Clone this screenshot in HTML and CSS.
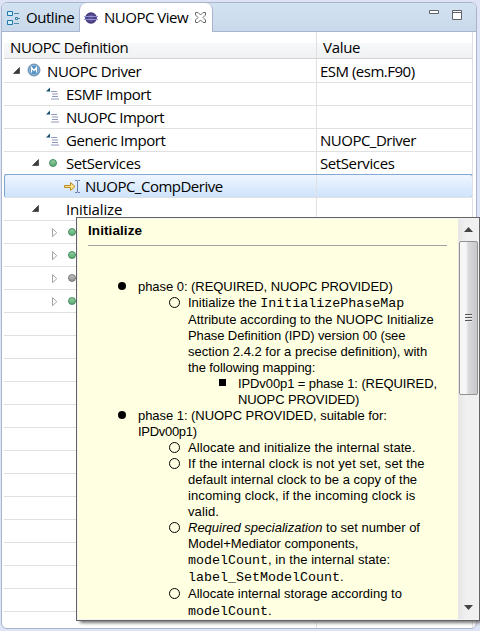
FILE: index.html
```html
<!DOCTYPE html>
<html lang="en">
<head>
<meta charset="utf-8">
<title>NUOPC View</title>
<link rel="stylesheet" href="styles.css">
</head>
<body>
<svg width="0" height="0" class="defs">
  <defs>
    <radialGradient id="ball"><stop offset="0" stop-color="#8078bb"/><stop offset="1" stop-color="#3b2d70"/></radialGradient>
    <g id="import">
      <path d="M0 5.500 4 1.500v4z" fill="#15506f"/>
      <path d="M5 5.500h6M6 8h6M6 10.500h6M5 13h8" stroke="#8f98b8" stroke-width="1"/>
    </g>
    <path id="open" d="M.5 6.500 6.500.5v6z" fill="#3c3c3c" stroke="#262626" stroke-width=".6"/>
    <path id="closed" d="M.5.7v8L4.800 4.700z" fill="#fff" stroke="#a4a4a4"/>
  </defs>
</svg>
<div class="panel">
  <div class="tabs">
    <div class="tab outline">
      <svg width="14" height="16" viewBox="0 0 14 16"><g fill="#d3f0fd" stroke="#1e78ad"><path d="M.5 1.500h5v4h-5zM.5 10.500h5v4h-5z"/><path d="M8.500 7.500h2v2h-2z" stroke="#397f9f"/></g><path d="M7 3.500h5M11 8.500h2M7 13.500h5" stroke="#4b8eac" fill="none"/></svg>
      <span class="t-outline">Outline</span>
    </div>
    <div class="tab active">
      <svg width="14" height="14" viewBox="0 0 14 14"><circle cx="7" cy="7" r="5.800" fill="url(#ball)"/><path d="M0 5.500h14M0 8.500h14" stroke="#8f91d6"/><path d="M1 7h12" stroke="#4b3e81"/></svg>
      <span class="t-view">NUOPC View</span>
      <svg class="close" width="11" height="11" viewBox="0 0 11 11"><path d="M.5.5h2.500L5.500 3 8 .5h2.500V3L8 5.500 10.500 8v2.500H8L5.500 8 3 10.500H.5V8L3 5.500.5 3z" fill="#fff" stroke="#6b6b6b"/></svg>
    </div>
    <div class="tools">
      <svg width="10" height="4"><path d="M.5.5h9v3h-9z" fill="#fff" stroke="#60636a"/></svg>
      <svg width="10" height="10"><path d="M.5.5h9v9h-9zM0 2.500h10" fill="#fff" stroke="#60636a"/></svg>
    </div>
  </div>
  <div class="tree">
    <div class="row head"><div class="name"><span class="t-def">NUOPC Definition</span></div><div class="value"><span class="t-value">Value</span></div></div>
    <div class="row l0"><div class="name"><svg class="arrow" width="8" height="8"><use href="#open"/></svg><svg class="m" width="14" height="14" viewBox="0 0 14 14"><circle cx="7" cy="7" r="6" fill="#5590c0" stroke="#7795b2"/><circle cx="7" cy="7" r="4.700" fill="none" stroke="#a9cae3" stroke-width=".7"/><path d="M4.500 9.500v-5L7 7.500l2.500-3v5" fill="none" stroke="#fff" stroke-width="1.200"/></svg><span class="t-driver">NUOPC Driver</span></div><div class="value"><span class="t-esm">ESM (esm.F90)</span></div></div>
    <div class="row l1"><div class="name"><svg class="imp" width="14" height="14"><use href="#import"/></svg><span class="t-esmf">ESMF Import</span></div><div class="value"></div></div>
    <div class="row l1"><div class="name"><svg class="imp" width="14" height="14"><use href="#import"/></svg><span class="t-nuopc">NUOPC Import</span></div><div class="value"></div></div>
    <div class="row l1"><div class="name"><svg class="imp" width="14" height="14"><use href="#import"/></svg><span class="t-generic">Generic Import</span></div><div class="value"><span class="t-nd">NUOPC_Driver</span></div></div>
    <div class="row l2"><div class="name"><svg class="arrow" width="8" height="8"><use href="#open"/></svg><i class="dot"></i><span class="t-set">SetServices</span></div><div class="value"><span class="t-set">SetServices</span></div></div>
    <div class="row sel"><div class="name"><svg class="derive" width="18" height="15" viewBox="0 0 18 15"><path d="M.5 6.500h6V3.500L11 7.500l-4.500 4V8.500h-6z" fill="#ffe68a" stroke="#bd8a22"/><path d="M11 1.500h2l.5.5.5-.5h2M13.500 2v11M11 13.500h2l.5-.5.5.5h2" fill="none" stroke="#6b7faf"/></svg><span class="t-comp">NUOPC_CompDerive</span></div><div class="value"></div></div>
    <div class="row l2"><div class="name"><svg class="arrow" width="8" height="8"><use href="#open"/></svg><i class="dot none"></i><span class="t-init">Initialize</span></div><div class="value"></div></div>
    <div class="row l3"><div class="name"><svg width="6" height="10"><use href="#closed"/></svg><i class="dot"></i></div><div class="value"></div></div>
    <div class="row l3"><div class="name"><svg width="6" height="10"><use href="#closed"/></svg><i class="dot"></i></div><div class="value"></div></div>
    <div class="row l3"><div class="name"><svg width="6" height="10"><use href="#closed"/></svg><i class="dot gray"></i></div><div class="value"></div></div>
    <div class="row l3"><div class="name"><svg width="6" height="10"><use href="#closed"/></svg><i class="dot"></i></div><div class="value"></div></div>
    <div class="row"><div class="name"></div><div class="value"></div></div>
    <div class="row"><div class="name"></div><div class="value"></div></div>
    <div class="row"><div class="name"></div><div class="value"></div></div>
    <div class="row"><div class="name"></div><div class="value"></div></div>
    <div class="row"><div class="name"></div><div class="value"></div></div>
    <div class="row"><div class="name"></div><div class="value"></div></div>
    <div class="row"><div class="name"></div><div class="value"></div></div>
    <div class="row"><div class="name"></div><div class="value"></div></div>
    <div class="row"><div class="name"></div><div class="value"></div></div>
    <div class="row"><div class="name"></div><div class="value"></div></div>
    <div class="row"><div class="name"></div><div class="value"></div></div>
    <div class="row"><div class="name"></div><div class="value"></div></div>
    <div class="row"><div class="name"></div><div class="value"></div></div>
    <div class="row last"><div class="name"></div><div class="value"></div></div>
  </div>
</div>
<div class="tooltip">
  <div class="doc">
    <h1>Initialize</h1>
    <ul class="disc">
      <li><p class="snug">phase 0: (REQUIRED, NUOPC PROVIDED)</p>
        <ul class="circle">
          <li><p class="tall">Initialize the <code>InitializePhaseMap</code></p><p>Attribute according to the NUOPC Initialize</p><p class="tight">Phase Definition (IPD) version 00 (see</p><p>section 2.4.2 for a precise definition), with</p><p class="tight">the following mapping:</p>
            <ul class="square"><li><p class="tight">IPDv00p1 = phase 1: (REQUIRED,</p><p class="tight">NUOPC PROVIDED)</p></li></ul>
          </li>
        </ul>
      </li>
      <li><p class="snug">phase 1: (NUOPC PROVIDED, suitable for:</p><p class="tighter">IPDv00p1)</p>
        <ul class="circle">
          <li><p class="loose">Allocate and initialize the internal state.</p></li>
          <li><p class="wide">If the internal clock is not yet set, set the</p><p>default internal clock to be a copy of the</p><p class="wide">incoming clock, if the incoming clock is</p><p class="wide">valid.</p></li>
          <li><p><em>Required specialization</em> to set number of</p><p class="snug">Model+Mediator components,</p><p class="tall loose"><code>modelCount</code>, in the internal state:</p><p class="tall"><code>label_SetModelCount</code>.</p></li>
          <li><p class="tall">Allocate internal storage according to</p><p><code>modelCount</code>.</p></li>
        </ul>
      </li>
    </ul>
  </div>
  <div class="scroll">
    <svg class="up" width="9" height="5"><path d="M0 5 4.500 0 9 5z" fill="#444"/></svg>
    <div class="thumb"><i></i><i></i><i></i></div>
    <svg class="down" width="9" height="5"><path d="M0 0h9L4.500 5z" fill="#444"/></svg>
  </div>
</div>
</body>
</html>
```

FILE: styles.css
```css
* { box-sizing: border-box; }
body { margin: 0; width: 480px; height: 631px; overflow: hidden; background: #dee4f5; position: relative; padding: 2px 3px 2px 1px; font: 15px/22px "Open Sans", "Noto Sans", sans-serif; color: #000; }
svg { flex: none; display: block; }
.defs { position: absolute; }
.panel { height: 627px; border: 1px solid #a9b5cc; border-radius: 6px; background: #fff; overflow: hidden; }
.tabs { height: 29px; display: flex; background: linear-gradient(#d3e2f1, #c9d9ea); border-bottom: 1px solid #a9b4ce; }
.tab { display: flex; align-items: center; white-space: nowrap; }
.outline { width: 77px; padding-left: 5px; gap: 5px; }
.outline svg { margin-top: 2px; }
.active { width: 134px; height: 29px; background: #fff; border: 1px solid #a9b4ce; border-width: 0 1px; border-radius: 7px 7px 0 0; padding-left: 4px; gap: 6px; }
.t-view { margin-bottom: 2px; }
.close { margin-left: 1px; margin-top: -1px; }
.tools { margin-left: auto; margin-right: 14px; display: flex; gap: 13px; padding-top: 7px; }
.tree { padding: 0 3px 0 2px; }
.row { display: flex; height: 23px; border-bottom: 1px solid #e0e0e0; white-space: nowrap; }
.name { width: 313px; border-right: 1px solid #e0e0e0; display: flex; align-items: center; }
.value { width: 156px; border-right: 1px solid #e0e0e0; padding-left: 3px; display: flex; align-items: center; }
.head { height: 27px; background: linear-gradient(#fff 42%, #f7f8f9 43%, #f0f1f3); border-color: #d2d3d6; }
.head .name { padding: 4px 0 0 6px; }
.head .value { padding: 4px 0 0 6px; }
.head + .row { height: 24px; }
.l0 .name { padding-left: 9px; }
.m { margin: -1px 6px 0 6px; }
.l1 .name { padding-left: 42px; }
.imp { margin-right: 6px; margin-top: -2px; }
.l2 .name { padding-left: 28px; }
.dot { width: 8px; height: 8px; border: 1px solid #3d8a5c; border-radius: 50%; background: linear-gradient(#92cda0, #5eaa72); margin: 0 9px 0 9px; flex: none; }
.dot.none { visibility: hidden; }
.dot.gray { border-color: #777; background: linear-gradient(#c0c0c0, #929292); }
.sel { background: linear-gradient(#eff6ff, #cee3fc); box-shadow: inset 1px 0 #7da2ce, inset -1px 0 #7da2ce, 0 -1px #84a9d7; border-radius: 2px; }
.sel .name { padding-left: 60px; }
.derive { margin-right: 3px; }
.l3 .name { padding-left: 48px; }
.l3 svg { margin-top: 2px; }
.l3 .dot { margin-left: 10px; }
.last { border: 0; height: 16px; }
.t-outline { letter-spacing: -.45px; }
.t-value { letter-spacing: -.3px; }
.t-def, .t-driver, .t-set { letter-spacing: -.4px; }
.t-init { letter-spacing: -.15px; }
.t-esmf { letter-spacing: -.4px; }
.t-generic { letter-spacing: -.45px; }
.t-view, .t-nuopc, .t-nd, .t-comp, .t-esm { letter-spacing: -.5px; }
.tooltip { position: absolute; left: 76px; top: 217px; width: 404px; height: 404px; border: 1px solid #636363; background: #ffffe1; display: flex; box-shadow: inset 0 0 0 1px #f3f3f3, 3px 3px 3px -1px #777; }
.doc { flex: 1; font: 13px/16px "Liberation Sans", Arial, sans-serif; white-space: nowrap; }
h1 { margin: 0 10px 33px 11px; height: 28px; padding-top: 5px; border-bottom: 1px solid #a0a0a0; font-size: 13.500px; line-height: 16px; letter-spacing: .08px; }
.doc p { margin: 0; height: 16px; }
.doc p.tall { height: 17px; }
.doc .snug { letter-spacing: -.05px; }
.doc .tight { letter-spacing: -.1px; }
.doc .tighter { letter-spacing: -.3px; }
.doc .loose { letter-spacing: .06px; }
.doc .wide { letter-spacing: .12px; }
.doc ul { list-style: none; margin: 0; padding: 0; }
.doc li { display: block; position: relative; }
.doc .disc { padding-left: 61px; }
.doc .circle { padding-left: 50px; }
.doc .square { padding-left: 50px; }
.doc li::before { content: ""; position: absolute; left: -20px; top: 3px; width: 8px; height: 8px; background: #000; border-radius: 50%; }
.doc .circle > li::before { background: none; border: 1px solid #000; left: -19px; top: 2px; width: 9px; height: 9px; }
.doc .square > li::before { background: #000; border: 0; border-radius: 0; left: -19px; top: 3px; width: 7px; height: 7px; }
code { font: 13.333px/15px "Liberation Mono", "Courier New", monospace; letter-spacing: 0; }
.scroll { width: 20px; margin: 1px; background: linear-gradient(90deg, #e6e6e6, #f0f0f0 40%); display: flex; flex-direction: column; align-items: center; }
.up { margin-top: 8px; }
.thumb { width: 19px; height: 154px; margin-top: 9px; border: 1px solid #929292; border-radius: 2px; background: linear-gradient(90deg, #f6f6f6 0 35%, #d9d9dc 50%, #c8c8cc); display: flex; flex-direction: column; align-items: center; justify-content: center; gap: 1px; }
.thumb i { width: 7px; height: 2px; background: #eee; border-top: 1px solid #555; }
.down { margin-top: auto; margin-bottom: 9px; }
```
